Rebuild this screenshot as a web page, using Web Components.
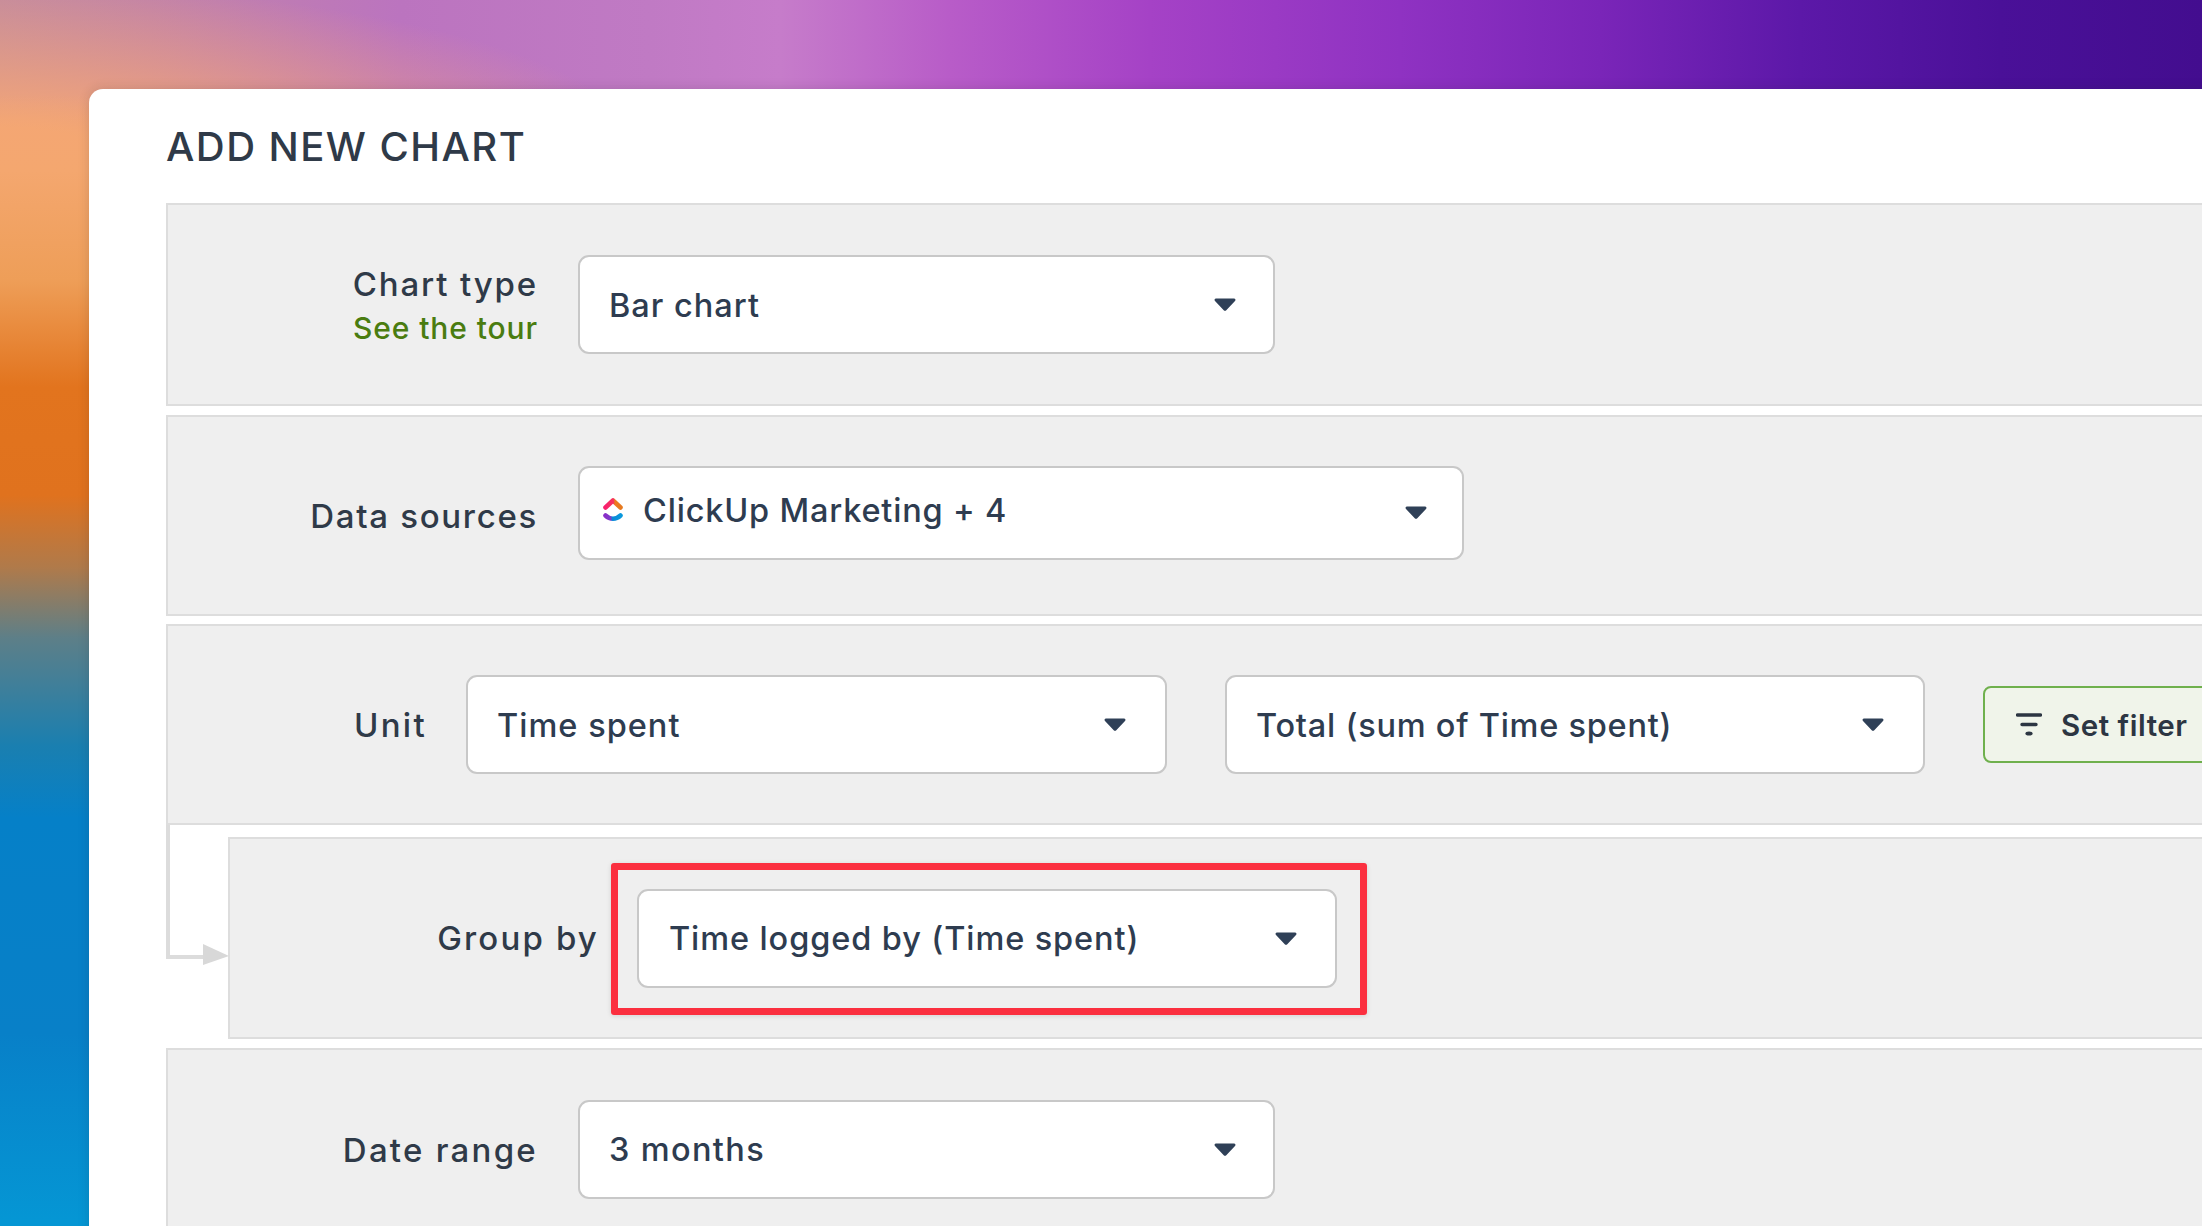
<!doctype html><html><head><meta charset="utf-8"><style>
html,body{margin:0;height:100%;overflow:hidden}
body{font-family:Inter,"Liberation Sans",sans-serif;color:#2f3a48}
</style></head><body>
<chart-backdrop>
<chart-card heading="ADD NEW CHART">
  <chart-panel style="--label:370px;--gap:40px;height:203px;margin-bottom:9px">
    <chart-label slot="label" style="--ls:1.85px;--nudge:4px">Chart type<chart-tour style="--ls:.9px">See the tour</chart-tour></chart-label>
    <chart-select style="--w:697px;--ls:1px;--caret:37px">Bar chart</chart-select>
  </chart-panel>
  <chart-panel style="--label:370px;--gap:40px;height:201px">
    <chart-label slot="label" style="--ls:1.7px;--nudge:0px">Data sources</chart-label>
    <chart-select style="--w:886px;--h:94px;--ls:.82px;--pad:23px;--caret:35px;--tt:-2px;margin-bottom:6px"><click-logo slot="icon"></click-logo>ClickUp Marketing + 4</chart-select>
  </chart-panel>
  <chart-panel style="--label:259px;--gap:39px;height:201px">
    <chart-label slot="label" style="--ls:2.3px;--nudge:0px">Unit</chart-label>
    <chart-select style="--w:701px;--ls:1.02px">Time spent</chart-select>
    <chart-select style="--w:700px;--ls:.76px;margin-left:58px">Total (sum of Time spent)</chart-select>
    <filter-button>Set filter</filter-button>
  </chart-panel>
  <chart-panel nested style="--label:369px;--gap:38px">
    <flow-connector slot="over"></flow-connector>
    <chart-label slot="label" style="--ls:2.15px">Group by</chart-label>
    <chart-select style="--w:700px;--ls:.9px;--pad:30px;--caret:38px"><mark-box slot="over"></mark-box>Time logged by (Time spent)</chart-select>
  </chart-panel>
  <chart-panel style="--label:370px;--gap:40px">
    <chart-label slot="label" style="--ls:2.25px;--nudge:1px">Date range</chart-label>
    <chart-select style="--w:697px;--ls:1.35px;--caret:37px">3 months</chart-select>
  </chart-panel>
</chart-card>
</chart-backdrop>
<script>
function def(name,html,init){customElements.define(name,class extends HTMLElement{constructor(){super();this.attachShadow({mode:'open'}).innerHTML=html;}connectedCallback(){if(init)init(this)}})}
def('chart-backdrop',`<style>:host{display:block;width:100%;height:100%;overflow:hidden;box-sizing:border-box;padding:89px 0 0 89px;
background:
 linear-gradient(to bottom,rgba(244,167,111,0) 95px,#f4a76f 170px,#ee9e58 280px,#e2741e 387px,#e0721e 495px,#b07a4a 567px,#5d7f88 638px,#1a7fb0 746px,#0580c8 818px,#0880c8 1033px,#0596d4 1220px) 0 0/89px 100% no-repeat,
 radial-gradient(ellipse 640px 165px at 0 150px,#f4a676 14%,rgba(244,166,118,0) 100%),
 linear-gradient(to right,#c48b9e 0,#c283a8 150px,#bb74bf 400px,#c07ac4 650px,#c67cca 780px,#b85cc8 950px,#a542c6 1150px,#8f32c2 1400px,#7a25b8 1600px,#5c18a8 1800px,#4a1098 2000px,#430d8f 2202px);}</style><slot></slot>`);
def('chart-card',`<style>:host{display:block;width:2300px;height:1300px;box-sizing:border-box;background:#fff;border-radius:14px 0 0 0;box-shadow:0 0 12px rgba(40,30,40,.16);padding:0 0 0 77px}
h1{margin:0;height:114px;box-sizing:border-box;padding-top:35px;font:500 40px/46px Inter,"Liberation Sans",sans-serif;letter-spacing:1.45px;color:#2f3a48}
.l{display:flex;flex-direction:column}</style><h1></h1><div class="l"><slot></slot></div>`,el=>{el.shadowRoot.querySelector('h1').textContent=el.getAttribute('heading')});
def('chart-panel',`<style>:host{display:block;position:relative;margin-bottom:8px;background:#efefef;border:2px solid #ddd;border-right:0;box-sizing:border-box;height:202px}
:host([nested]){margin:4px 0 9px 62px}
.r{display:flex;align-items:center;height:100%}
.lab{width:var(--label);margin-right:var(--gap);flex:none;display:flex;justify-content:flex-end}
</style><slot name="over"></slot><div class="r"><div class="lab"><slot name="label"></slot></div><slot></slot></div>`);
def('chart-label',`<style>:host{display:block;text-align:right;font-size:33px;font-weight:500;line-height:38px;letter-spacing:var(--ls);color:#2f3a48;position:relative;top:var(--nudge,0);white-space:nowrap}</style><slot></slot>`);
def('chart-tour',`<style>:host{display:block;font-size:30px;line-height:50px;letter-spacing:var(--ls);color:#4a7c10}</style><slot></slot>`);
def('chart-select',`<style>:host{display:flex;flex:none;position:relative;align-items:center;box-sizing:border-box;width:var(--w);height:var(--h,99px);background:#fff;border:2px solid #c8c8c8;border-radius:11px;padding:0 var(--caret,39px) 0 var(--pad,29px);font-size:32.5px;font-weight:500;letter-spacing:var(--ls);color:#2e3c50}
.t{flex:1;white-space:nowrap;line-height:38px;position:relative;top:var(--tt,1px)}
svg{flex:none;display:block}</style><slot name="over"></slot><slot name="icon"></slot><span class="t"><slot></slot></span><svg width="22" height="13" viewBox="0 0 22 13"><path d="M2 .5h18a1.4 1.4 0 0 1 1 2.4l-8.5 9a2 2 0 0 1-3 0L1 2.900A1.400 1.400 0 0 1 2 .5z" fill="#2f4057"/></svg>`);
def('click-logo',`<style>:host{display:block;flex:none;width:20px;height:25px;margin:-6px 20px 0 0}svg{display:block}</style><svg width="20" height="25" viewBox="0 0 20 25"><defs><linearGradient id="a" x1="0" x2="1" y1="0" y2="0"><stop offset="0" stop-color="#f8206e"/><stop offset=".55" stop-color="#f5365a"/><stop offset=".62" stop-color="#ef7a1e"/><stop offset="1" stop-color="#e67a20"/></linearGradient><linearGradient id="b" x1="0" x2="1" y1="0" y2="0"><stop offset="0" stop-color="#8a2fc8"/><stop offset=".35" stop-color="#7a3fc8"/><stop offset=".45" stop-color="#0a88d8"/><stop offset="1" stop-color="#0a98dc"/></linearGradient></defs><path d="M2.500 10.500 10 3.500l7.500 7" fill="none" stroke="url(#a)" stroke-width="4.600" stroke-linecap="round" stroke-linejoin="round"/><path d="M2.500 18.500c4.500 4.200 10.500 4.200 15 0" fill="none" stroke="url(#b)" stroke-width="4.600" stroke-linecap="round"/></svg>`);
def('filter-button',`<style>:host{display:flex;flex:none;align-items:center;box-sizing:border-box;width:260px;height:77px;margin-left:58px;background:#f0f4ea;border:2px solid #6fb04d;border-radius:8px;padding-left:31px;font-size:29.5px;font-weight:600;letter-spacing:.52px;color:#2c3542;white-space:nowrap}svg{display:block;flex:none;margin-right:19px}</style><svg width="26" height="23" viewBox="0 0 26 23"><path d="M1.500 2h23M6 11.500h14" stroke="#2c3542" stroke-width="3.400" stroke-linecap="round" fill="none"/><ellipse cx="13" cy="20.500" rx="3.600" ry="2.100" fill="#2c3542"/></svg><slot></slot>`);
def('mark-box',`<style>:host{position:absolute;left:-28px;right:-32px;top:-28px;bottom:-29px;box-sizing:border-box;border:7px solid #fb2f3f;border-radius:3px;box-shadow:0 1px 5px rgba(0,0,0,.12);pointer-events:none;z-index:2}</style>`);
def('flow-connector',`<style>:host{position:absolute;left:-64px;top:-14px;width:64px;height:145px;display:block}svg{display:block}</style><svg width="64" height="145" viewBox="0 0 64 145"><path d="M2 0V132H38" fill="none" stroke="#dcdcdc" stroke-width="4"/><path d="M37 119 63 131 37 140z" fill="#d8d8d8"/></svg>`);
</script></body></html>
